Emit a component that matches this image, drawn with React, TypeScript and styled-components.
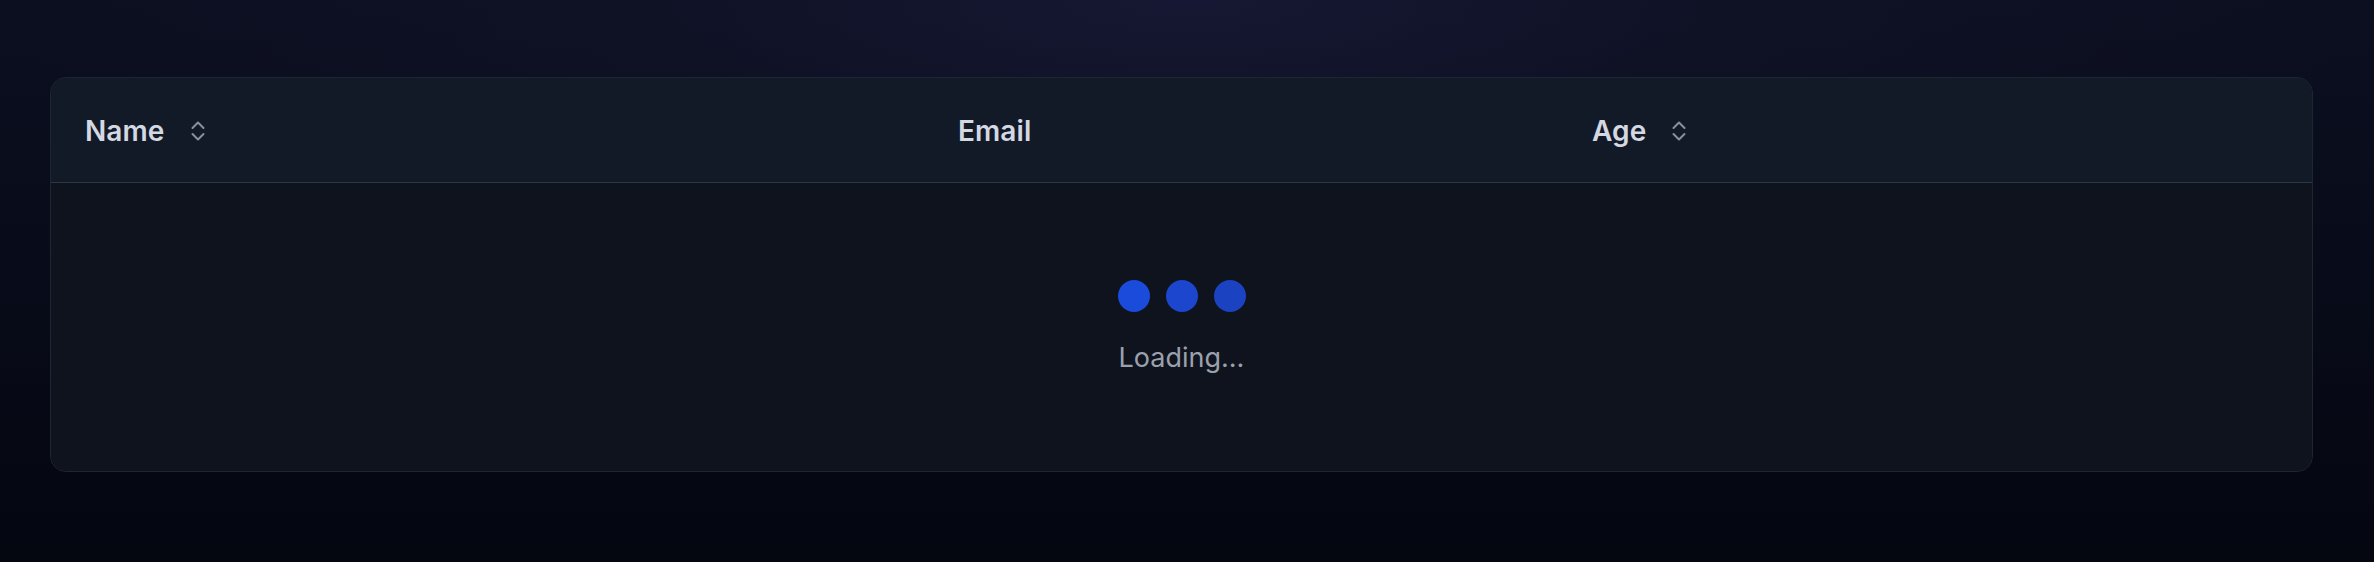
import styled, { createGlobalStyle } from "styled-components";

const GlobalStyle = createGlobalStyle`
  html, body {
    margin: 0;
    padding: 0;
    height: 100%;
  }
  body {
    font-family: Inter, "Noto Sans", "Liberation Sans", sans-serif;
    background: #060914;
  }
`;

const Page = styled.div`
  box-sizing: border-box;
  width: 100%;
  height: 562px;
  padding: 77px 61px 0 50px;
  background:
    radial-gradient(ellipse 50% 55% at 50% 0%, #161833 0%, rgba(18, 20, 42, 0.55) 45%, rgba(8, 11, 24, 0) 100%),
    linear-gradient(180deg, #0c0f20 0%, #070a17 60%, #040710 100%);
`;

const Card = styled.div`
  box-sizing: border-box;
  height: 395px;
  border: 1px solid #1e2633;
  border-radius: 16px;
  background: #10151f;
  overflow: hidden;
  display: flex;
  flex-direction: column;
`;

const HeaderRow = styled.div`
  display: grid;
  grid-template-columns: 873px 634px 1fr;
  align-items: center;
  height: 105px;
  padding: 2px 0 0 34px;
  box-sizing: border-box;
  background: #131a27;
  border-bottom: 1px solid #2a3940;
`;

const HeaderCell = styled.div`
  display: flex;
  align-items: center;
  gap: 25px;
  color: #d3d8e2;
  font-size: 28px;
  font-weight: 600;
  letter-spacing: 0.1px;
`;

const SortIcon = styled.svg`
  width: 16px;
  height: 22px;
  color: #8b919c;
`;

const Body = styled.div`
  flex: 1;
  display: flex;
  flex-direction: column;
  align-items: center;
  justify-content: center;
  gap: 29px;
  background: #0f131e;
`;

const Dots = styled.div`
  display: flex;
  gap: 16px;
`;

const Dot = styled.span<{ $shade: string }>`
  width: 32px;
  height: 32px;
  border-radius: 50%;
  background: ${(p) => p.$shade};
`;

const LoadingText = styled.div`
  color: #9aa1ad;
  font-size: 27px;
  font-weight: 400;
`;

function Sort() {
  return (
    <SortIcon viewBox="0 0 16 22" fill="none">
      <path
        d="M2.5 8 L8 2.5 L13.5 8 M2.5 14 L8 19.5 L13.5 14"
        stroke="currentColor"
        strokeWidth="2"
        strokeLinecap="round"
        strokeLinejoin="round"
      />
    </SortIcon>
  );
}

const columns = [
  { label: "Name", sortable: true },
  { label: "Email", sortable: false },
  { label: "Age", sortable: true },
];

export default function App() {
  return (
    <>
      <GlobalStyle />
      <Page>
        <Card>
          <HeaderRow>
            {columns.map((c) => (
              <HeaderCell key={c.label}>
                {c.label}
                {c.sortable && <Sort />}
              </HeaderCell>
            ))}
          </HeaderRow>
          <Body>
            <Dots>
              <Dot $shade="#1b4bdb" />
              <Dot $shade="#1b46cd" />
              <Dot $shade="#1b42c0" />
            </Dots>
            <LoadingText>Loading...</LoadingText>
          </Body>
        </Card>
      </Page>
    </>
  );
}
